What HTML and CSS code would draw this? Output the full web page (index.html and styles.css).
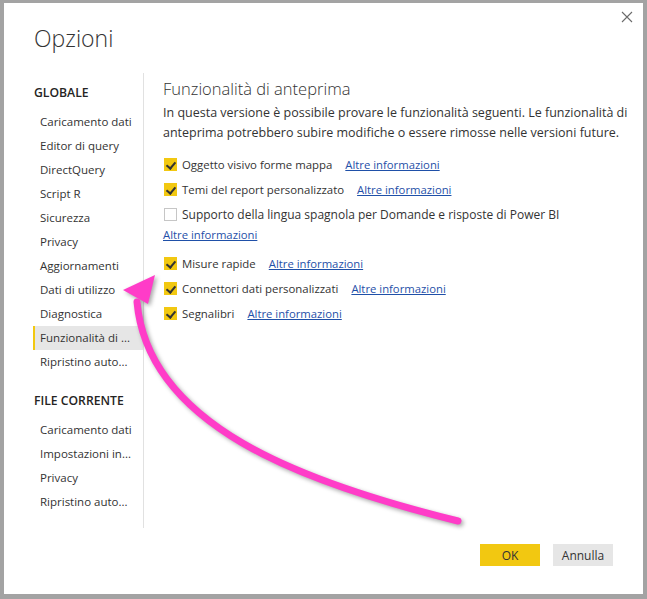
FILE: index.html
```html
<!DOCTYPE html>
<html lang="it">
<head>
<meta charset="utf-8">
<title>Opzioni</title>
<link rel="stylesheet" href="styles.css">
</head>
<body>
<div class="dialog">
  <button class="close" aria-label="Chiudi">
    <svg width="12" height="12" viewBox="0 0 12 12"><path d="M1 1 L11 11 M11 1 L1 11" stroke="#6b6b6b" stroke-width="1.1" fill="none"/></svg>
  </button>
  <header class="head"><h1 class="title">Opzioni</h1></header>
  <div class="body">
    <nav class="side">
      <div class="group">GLOBALE</div>
      <ul class="items">
        <li class="item">Caricamento dati</li>
        <li class="item">Editor di query</li>
        <li class="item">DirectQuery</li>
        <li class="item">Script R</li>
        <li class="item">Sicurezza</li>
        <li class="item">Privacy</li>
        <li class="item">Aggiornamenti</li>
        <li class="item">Dati di utilizzo</li>
        <li class="item">Diagnostica</li>
        <li class="item selected">Funzionalità di ...</li>
        <li class="item">Ripristino auto...</li>
      </ul>
      <div class="group group2">FILE CORRENTE</div>
      <ul class="items">
        <li class="item">Caricamento dati</li>
        <li class="item">Impostazioni in...</li>
        <li class="item">Privacy</li>
        <li class="item">Ripristino auto...</li>
      </ul>
    </nav>
    <section class="content">
      <h2 class="heading">Funzionalità di anteprima</h2>
      <p class="desc">In questa versione è possibile provare le funzionalità seguenti. Le funzionalità di anteprima potrebbero subire modifiche o essere rimosse nelle versioni future.</p>
      <div class="opts">
        <div class="row"><span class="cb on"></span><span class="lbl">Oggetto visivo forme mappa</span><a class="link" href="#">Altre informazioni</a></div>
        <div class="row"><span class="cb on"></span><span class="lbl">Temi del report personalizzato</span><a class="link" href="#">Altre informazioni</a></div>
        <div class="row"><span class="cb"></span><span class="lbl long">Supporto della lingua spagnola per Domande e risposte di Power BI</span></div>
        <div class="linkrow"><a class="link" href="#">Altre informazioni</a></div>
        <div class="row"><span class="cb on"></span><span class="lbl">Misure rapide</span><a class="link" href="#">Altre informazioni</a></div>
        <div class="row"><span class="cb on"></span><span class="lbl">Connettori dati personalizzati</span><a class="link" href="#">Altre informazioni</a></div>
        <div class="row"><span class="cb on"></span><span class="lbl">Segnalibri</span><a class="link" href="#">Altre informazioni</a></div>
      </div>
    </section>
  </div>
  <footer class="foot">
    <button class="btn ok">OK</button>
    <button class="btn cancel">Annulla</button>
  </footer>
</div>
<svg class="arrow" width="647" height="599" viewBox="0 0 647 599">
  <path d="M458 521 C 300 482, 148 425, 137 302" stroke="#ff3cc8" stroke-width="7" fill="none" stroke-linecap="round"/>
  <polygon points="155,275 123,290 148,304" fill="#ff3cc8"/>
</svg>
</body>
</html>
```
FILE: styles.css
```css
* { box-sizing: border-box; }
html, body { margin: 0; padding: 0; }
body {
  background: #a3a3a3;
  width: 647px;
  height: 599px;
  overflow: hidden;
  padding: 3px 4px 5px 4px;
  font-family: "Open Sans", "Noto Sans", sans-serif;
  color: #333;
  position: relative;
}
.dialog {
  background: #fff;
  width: 639px;
  height: 591px;
  position: relative;
}
.close {
  position: absolute;
  right: 10px;
  top: 8px;
  width: 12px;
  height: 12px;
  padding: 0;
  border: 0;
  background: none;
  display: block;
}
.close svg { display: block; }
.head { height: 70px; padding: 20px 0 0 30px; }
.title {
  margin: 0;
  font-size: 23px;
  line-height: 30px;
  font-weight: 300;
  color: #333;
}
.body { display: flex; height: 455px; }
.side {
  width: 140px;
  border-right: 1px solid #e1e1e1;
  padding-top: 8px;
}
.group {
  padding-left: 30px;
  font-size: 12.2px;
  line-height: 24px;
  font-weight: 600;
  color: #252423;
  margin-bottom: 5px;
}
.group2 { margin-top: 15px; }
.items { list-style: none; margin: 0; padding: 0; }
.item {
  margin-left: 29px;
  border-left: 2px solid transparent;
  padding-left: 5px;
  font-size: 11.5px;
  line-height: 24px;
  height: 24px;
  white-space: nowrap;
  color: #333;
}
.item.selected { background: #e6e6e6; border-left-color: #f2c811; }
.content { padding: 4px 0 0 19px; flex: 1; }
.heading {
  margin: 0;
  font-size: 16.5px;
  line-height: 24px;
  font-weight: 300;
  color: #333;
}
.desc {
  margin: 2px 0 0;
  font-size: 12.5px;
  line-height: 20px;
  color: #333;
  width: 475px;
}
.opts { margin-top: 9px; }
.row {
  display: flex;
  align-items: center;
  height: 25px;
  font-size: 11.4px;
  padding-left: 1px;
}
.cb {
  width: 13px;
  height: 13px;
  border: 1px solid #c6c6c6;
  background: #fff;
  margin-right: 5px;
  flex: none;
  position: relative;
}
.cb.on { background: #f2c811; border-color: #f2c811; }
.cb.on::after {
  content: "";
  position: absolute;
  left: 3px;
  top: 1px;
  width: 4px;
  height: 7px;
  border-right: 2px solid #333;
  border-bottom: 2px solid #333;
  transform: rotate(40deg);
}
.lbl { color: #333; white-space: nowrap; }
.lbl.long { font-size: 12px; }
.link {
  color: #1f50a8;
  text-decoration: underline;
  margin-left: 13px;
  white-space: nowrap;
  font-size: 11.3px;
}
.linkrow { font-size: 11.3px; line-height: 18px; margin: -1px 0 7px; }
.linkrow .link { margin-left: 0; }
.foot {
  display: flex;
  justify-content: flex-end;
  gap: 13px;
  padding: 16px 30px 0 0;
}
.btn {
  width: 60px;
  height: 22px;
  border: 0;
  padding: 0;
  font-family: inherit;
  font-size: 12px;
  color: #333;
}
.ok { background: #f2c811; }
.cancel { background: #e6e6e6; }
.arrow {
  position: absolute;
  left: 0;
  top: 0;
  filter: drop-shadow(2px 2px 2px rgba(0,0,0,0.35));
  pointer-events: none;
}
```
